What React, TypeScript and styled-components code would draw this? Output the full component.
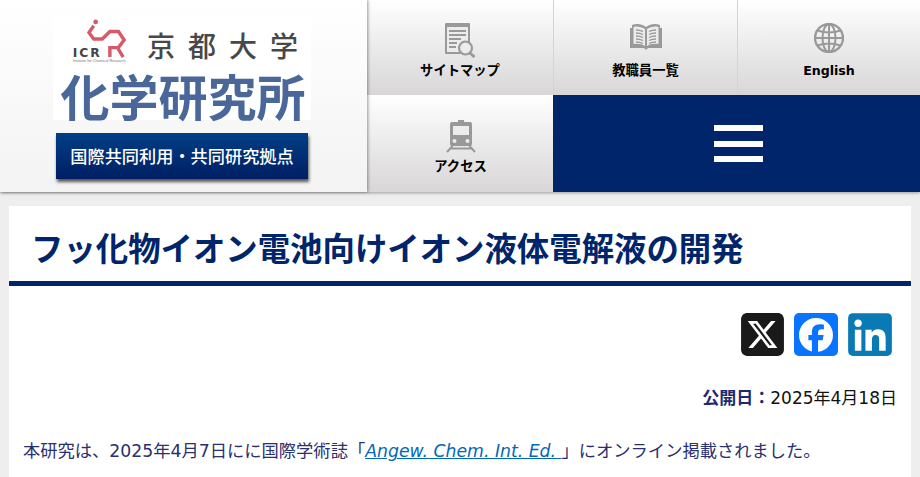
import styled, { createGlobalStyle } from "styled-components";
import { FaFacebook, FaLinkedin, FaSquareXTwitter } from "react-icons/fa6";

const GlobalStyle = createGlobalStyle`
  html, body {
    margin: 0;
    padding: 0;
    background: #eeeeee;
    font-family: "DejaVu Sans", "Noto Sans CJK JP", sans-serif;
    overflow: hidden;
  }
`;

const Page = styled.div`
  width: 920px;
  height: 477px;
  overflow: hidden;
`;

const Header = styled.header`
  display: flex;
  height: 192px;
  box-shadow: 0 1px 3px rgba(0, 0, 0, 0.35);
  position: relative;
`;

const LogoArea = styled.div`
  width: 367px;
  flex-shrink: 0;
  box-sizing: border-box;
  padding: 15px 0 0 53px;
  background: linear-gradient(#ffffff, #f3f3f3);
  box-shadow: 1px 0 3px rgba(0, 0, 0, 0.4);
  position: relative;
  z-index: 1;
`;

const LogoImage = styled.div`
  width: 258px;
  height: 105px;
  background: #ffffff;
  display: flex;
  flex-direction: column;
  align-items: center;
`;

const LogoTop = styled.div`
  display: flex;
  align-items: flex-start;
  width: 100%;
  height: 55px;
  box-sizing: border-box;
  padding-left: 17px;
`;

const IcrLabel = styled.text`
  font-family: "DejaVu Sans", sans-serif;
  font-weight: 700;
  font-size: 13px;
  letter-spacing: 2px;
  fill: #444444;
`;

const IcrCaption = styled.text`
  font-family: "Liberation Sans", sans-serif;
  font-size: 4px;
  fill: #777777;
`;

const KyotoName = styled.div`
  margin: 14px 0 0 20px;
  font-family: "Noto Sans CJK JP", sans-serif;
  font-size: 28px;
  line-height: 32px;
  font-weight: 500;
  letter-spacing: 13px;
  color: #484848;
  white-space: nowrap;
`;

const InstituteName = styled.div`
  margin-left: 2px;
  font-family: "Noto Sans CJK JP", sans-serif;
  font-size: 49px;
  line-height: 50px;
  font-weight: 600;
  color: #4a6799;
  white-space: nowrap;
`;

const Banner = styled.div`
  width: 252px;
  height: 46px;
  margin: 13px 0 0 3px;
  padding-bottom: 1px;
  box-sizing: border-box;
  background: linear-gradient(#003f86, #001f63);
  box-shadow: 1px 3px 3px rgba(0, 0, 0, 0.65);
  color: #ffffff;
  font-family: "Noto Sans CJK JP", sans-serif;
  font-size: 17.2px;
  font-weight: 500;
  display: flex;
  align-items: center;
  justify-content: center;
  white-space: nowrap;
`;

const NavGrid = styled.nav`
  flex: 1;
  display: grid;
  grid-template-columns: 187px 184px 1fr;
  grid-template-rows: 95px 97px;
`;

const NavCell = styled.a<{ $divider?: boolean; $top: number }>`
  display: flex;
  flex-direction: column;
  align-items: center;
  box-sizing: border-box;
  padding-top: ${(p) => p.$top}px;
  background: linear-gradient(#ffffff, #d8d6d6);
  border-right: ${(p) => (p.$divider ? "1px solid #d4d4d4" : "0")};
  color: #000000;
  font-size: 13.3px;
  font-weight: 700;
  line-height: 18px;
`;

const IconSlot = styled.div`
  height: 39px;
  display: flex;
  align-items: flex-start;
  justify-content: center;
`;

const LatinLabel = styled.span`
  font-size: 12.6px;
`;

const MenuCell = styled.div`
  grid-column: span 2;
  margin-left: -1px;
  background: #00256b;
  display: flex;
  align-items: center;
  box-sizing: border-box;
  padding-left: 161px;
`;

const MenuBars = styled.div`
  width: 49px;
  display: flex;
  flex-direction: column;
  gap: 9.5px;
  span {
    display: block;
    height: 6px;
    background: #ffffff;
  }
`;

const Card = styled.main`
  margin: 14px 9px 0;
  background: #ffffff;
  height: 300px;
`;

const Title = styled.h1`
  margin: 0;
  padding: 5px 22px 0;
  height: 70px;
  border-bottom: 5px solid #00256b;
  display: flex;
  align-items: center;
  font-family: "Noto Sans CJK JP", sans-serif;
  font-size: 32.4px;
  font-weight: 700;
  color: #00256b;
  white-space: nowrap;
`;

const ShareRow = styled.div`
  display: flex;
  justify-content: flex-end;
  gap: 10px;
  padding: 27px 19px 0 0;
`;

const ShareIcon = styled.a<{ $bg: string; $w: number }>`
  width: ${(p) => p.$w}px;
  height: 43px;
  border-radius: 5px;
  background: ${(p) => p.$bg};
  color: #ffffff;
  display: flex;
  align-items: center;
  justify-content: center;
  overflow: hidden;
`;

const Published = styled.div`
  text-align: right;
  padding: 30px 14px 0 0;
  font-size: 17px;
  line-height: 24px;
  color: #111111;
  strong {
    color: #1d2a6e;
  }
`;

const Paragraph = styled.p`
  margin: 29px 0 0;
  padding-left: 14px;
  font-size: 17.28px;
  line-height: 24px;
  color: #2a2f6e;
  white-space: nowrap;
  a {
    color: #0068b7;
    font-style: italic;
    text-decoration: underline;
  }
`;

const ICON = "#999999";
const CUT = "#ececec";

const SitemapIcon = () => (
  <svg width="31" height="35" viewBox="0 0 31 35">
    <rect x="0" y="0" width="25" height="31" rx="1" fill={ICON} />
    <rect x="2" y="4" width="21" height="25" fill={CUT} />
    <g fill={ICON}>
      <rect x="4" y="7" width="17" height="2" />
      <rect x="4" y="11" width="17" height="2" />
      <rect x="4" y="15" width="12" height="2" />
      <rect x="4" y="19" width="8" height="2" />
      <rect x="4" y="23" width="7" height="2" />
    </g>
    <circle cx="20.500" cy="25" r="6.500" fill={CUT} stroke={ICON} strokeWidth="2.200" />
    <path d="M25 30l4.500 4" stroke={ICON} strokeWidth="3" />
  </svg>
);

const BookIcon = () => (
  <svg width="32" height="27" viewBox="0 0 32 27">
    <path
      d="M0 5h2V2c5-2 10-1 14 2 4-3 9-4 14-2v3h2v20H18l-2 2-2-2H0z"
      fill={ICON}
    />
    <path d="M3.500 4c4-1 8 0 11.500 2v17c-3-2-7-2.500-11.500-2z" fill={CUT} />
    <path d="M28.500 4c-4-1-8 0-11.500 2v17c3-2 7-2.500 11.500-2z" fill={CUT} />
    <g stroke={ICON} strokeWidth="1.300" fill="none">
      <path d="M6 7c2.500 0 5 .5 7 1.500M6 10c2.500 0 5 .5 7 1.500M6 13c2.500 0 5 .5 7 1.500M6 16c2.500 0 5 .5 7 1.500M6 19c2.500 0 5 .5 7 1.500" />
      <path d="M26 7c-2.500 0-5 .5-7 1.500M26 10c-2.500 0-5 .5-7 1.500M26 13c-2.500 0-5 .5-7 1.500M26 16c-2.500 0-5 .5-7 1.500M26 19c-2.500 0-5 .5-7 1.500" />
    </g>
  </svg>
);

const TrainIcon = () => (
  <svg width="30" height="34" viewBox="0 0 30 34">
    <rect x="12" y="1" width="6" height="3" fill={ICON} />
    <rect x="4" y="3" width="22" height="24" rx="2" fill={ICON} />
    <rect x="7" y="7" width="16" height="9" fill={CUT} />
    <circle cx="8.500" cy="22" r="2" fill={CUT} />
    <circle cx="21.500" cy="22" r="2" fill={CUT} />
    <path
      d="M6.500 27L1 33M23.500 27L29 33M5 29.500h20"
      stroke={ICON}
      strokeWidth="2"
      fill="none"
    />
  </svg>
);

const GlobeIcon = () => (
  <svg width="30" height="30" viewBox="0 0 30 30" fill="none">
    <g stroke={ICON} strokeWidth="2">
      <circle cx="15" cy="15" r="14" strokeWidth="2.400" />
      <ellipse cx="15" cy="15" rx="6.500" ry="14" />
      <path d="M15 1v28M1 15h28M3.500 7.500c7 2.500 16 2.500 23 0M3.500 22.500c7-2.500 16-2.500 23 0" />
    </g>
  </svg>
);

const IcrLogo = () => (
  <svg width="60" height="50" viewBox="0 0 60 50" fill="none">
    <circle cx="27" cy="6" r="2.500" fill="#d75a68" />
    <path
      d="M25 10l-5 7 5 7h9l8-8h9l6 9-6 8h-9v10M50 33l6 10"
      stroke="#d75a68"
      strokeWidth="3.600"
    />
    <IcrLabel x="3" y="43">
      ICR
    </IcrLabel>
    <IcrCaption x="3" y="48">
      Institute for Chemical Research
    </IcrCaption>
  </svg>
);

export default function App() {
  return (
    <Page>
      <GlobalStyle />
      <Header>
        <LogoArea>
          <LogoImage>
            <LogoTop>
              <IcrLogo />
              <KyotoName>京都大学</KyotoName>
            </LogoTop>
            <InstituteName>化学研究所</InstituteName>
          </LogoImage>
          <Banner>国際共同利用・共同研究拠点</Banner>
        </LogoArea>
        <NavGrid>
          <NavCell $divider $top={23}>
            <IconSlot>
              <SitemapIcon />
            </IconSlot>
            サイトマップ
          </NavCell>
          <NavCell $divider $top={23}>
            <IconSlot>
              <BookIcon />
            </IconSlot>
            教職員一覧
          </NavCell>
          <NavCell $top={23}>
            <IconSlot>
              <GlobeIcon />
            </IconSlot>
            <LatinLabel>English</LatinLabel>
          </NavCell>
          <NavCell $top={24}>
            <IconSlot>
              <TrainIcon />
            </IconSlot>
            アクセス
          </NavCell>
          <MenuCell>
            <MenuBars>
              <span />
              <span />
              <span />
            </MenuBars>
          </MenuCell>
        </NavGrid>
      </Header>
      <Card>
        <Title>フッ化物イオン電池向けイオン液体電解液の開発</Title>
        <ShareRow>
          <ShareIcon $bg="#ffffff" $w={43}>
            <FaSquareXTwitter size={49} color="#1a1a1a" />
          </ShareIcon>
          <ShareIcon $bg="#0a74ff" $w={44}>
            <FaFacebook size={34} />
          </ShareIcon>
          <ShareIcon $bg="#ffffff" $w={44}>
            <FaLinkedin size={50} color="#0a7ab5" />
          </ShareIcon>
        </ShareRow>
        <Published>
          <strong>公開日：</strong>2025年4月18日
        </Published>
        <Paragraph>
          本研究は、2025年4月7日にに国際学術誌「<a>Angew. Chem. Int. Ed. </a>」にオンライン掲載されました。
        </Paragraph>
      </Card>
    </Page>
  );
}
